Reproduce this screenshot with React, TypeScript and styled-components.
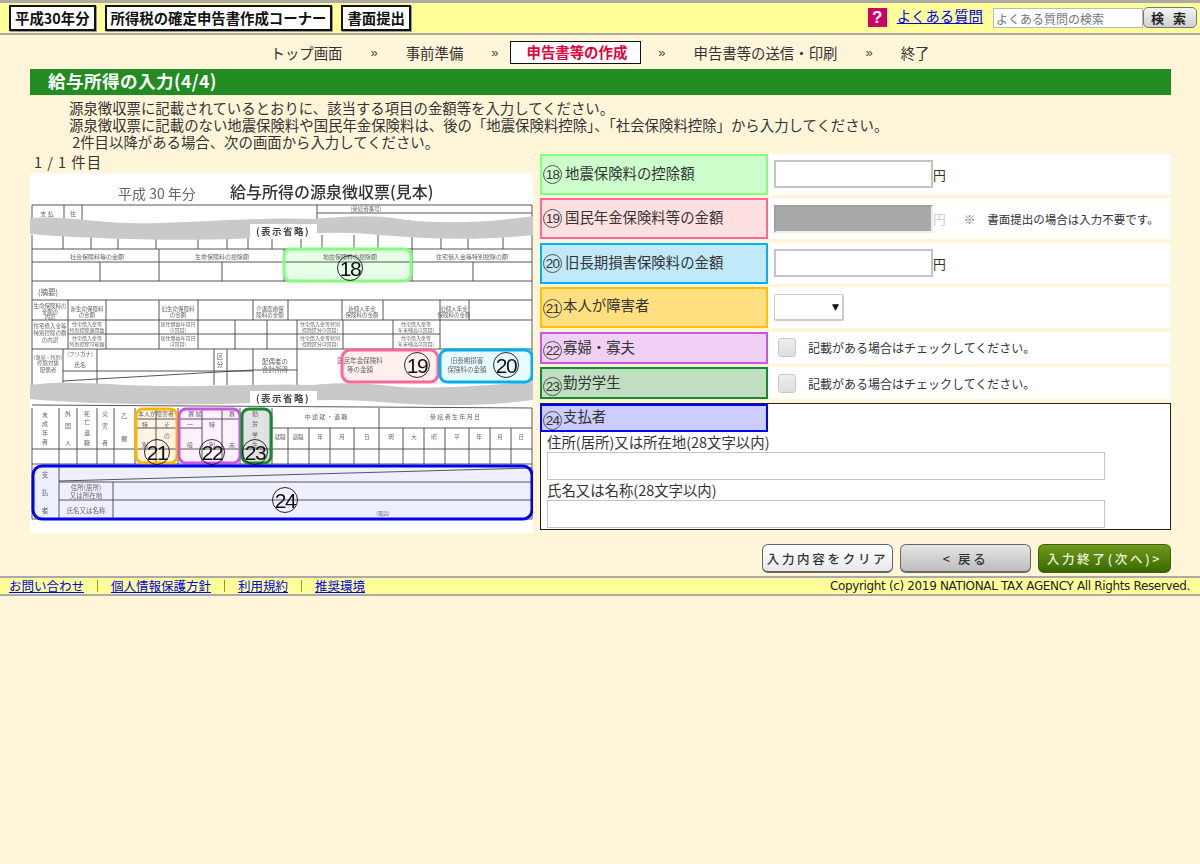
import React from "react";
import styled, { createGlobalStyle } from "styled-components";

const GlobalStyle = createGlobalStyle`
  html, body { margin: 0; padding: 0; }
  body {
    background: #fff6da;
    color: #333;
    font-family: "Noto Sans CJK JP", "Liberation Sans", sans-serif;
    font-size: 14.4px;
    min-height: 864px;
  }
`;

const TopBar = styled.header`
  box-sizing: border-box;
  height: 35px;
  background: #ffff99;
  border-top: 3px solid #aaa;
  border-bottom: 2px solid #aaa;
  padding: 2px 3px 0 9px;
  display: flex;
  align-items: flex-start;
`;
const TitleBox = styled.div`
  box-sizing: border-box;
  height: 26px;
  background: #fff;
  border: 2px solid #111;
  box-shadow: 1px 1px 0 #999;
  color: #111;
  font-weight: 700;
  font-size: 14.4px;
  line-height: 21px;
  padding: 0 4px;
  margin-right: 9px;
  white-space: nowrap;
`;
const Spacer = styled.div`flex: 1;`;
const HelpIcon = styled.div`
  width: 19px;
  height: 19px;
  margin-top: 3px;
  background: #cc0066;
  color: #fff;
  font: 700 17px/19px "Liberation Sans", sans-serif;
  text-align: center;
`;
const FaqLink = styled.a`
  color: #0000ee;
  text-decoration: underline;
  font-size: 14.4px;
  line-height: 20px;
  margin: 1px 10px 0 10px;
`;
const SearchInput = styled.input`
  box-sizing: border-box;
  width: 150px;
  height: 20px;
  margin-top: 3px;
  border: 1px solid #bbb;
  background: #fff;
  padding: 0 2px;
  font-family: inherit;
  font-size: 12px;
  &::placeholder { color: #777; opacity: 1; }
`;
const SearchButton = styled.button`
  box-sizing: border-box;
  width: 54px;
  height: 21px;
  margin: 2px 0 0 0;
  padding: 0;
  border: 1px solid #777;
  border-radius: 5px;
  background: linear-gradient(#f4f4f4, #cfcfcf);
  color: #222;
  font: 700 13px/18px "Noto Sans CJK JP", sans-serif;
  letter-spacing: 3px;
`;

const StepNav = styled.nav`
  height: 34px;
  display: flex;
  align-items: center;
  justify-content: center;
  gap: 28px;
  padding-top: 0;
`;
const Step = styled.span`
  color: #333;
  font-size: 14.4px;
  white-space: nowrap;
`;
const Arrow = styled.span`
  color: #444;
  font: 13px "Liberation Sans", sans-serif;
`;
const ActiveStep = styled.span`
  box-sizing: border-box;
  height: 23px;
  line-height: 20px;
  padding: 0 13px 0 16px;
  margin: 1px -11px 0 -17px;
  background: #fff;
  border: 1px solid #111;
  color: #e6003c;
  font-weight: 700;
  font-size: 14.4px;
  white-space: nowrap;
`;

const Main = styled.main`
  margin: 0 29px 0 30px;
`;
const PageTitle = styled.h1`
  box-sizing: border-box;
  height: 26px;
  margin: 0;
  padding-left: 18px;
  background: #228b22;
  color: #fff;
  font-size: 17.6px;
  font-weight: 700;
  line-height: 24px;
  letter-spacing: 0.4px;
`;
const Intro = styled.div`
  padding: 4px 0 0 39px;
  height: 58px;
  box-sizing: border-box;
  font-size: 14.4px;
  line-height: 17px;
  color: #333;
`;
const Columns = styled.div`
  display: flex;
  gap: 7px;
  align-items: flex-start;
`;
const LeftColumn = styled.div`
  width: 503px;
  flex: none;
`;
const Counter = styled.div`
  height: 20px;
  padding-left: 4px;
  font-size: 14.4px;
  line-height: 18px;
  letter-spacing: 1px;
  color: #333;
`;
const SlipDrawing = styled.svg`
  display: block;
  width: 503px;
  height: 360px;
  background: #fff;
  filter: blur(0.3px);
`;
const RightColumn = styled.div`
  flex: 1;
  display: flex;
  flex-direction: column;
  gap: 3.5px;
  padding-top: 0.5px;
`;
const Row = styled.div<{ $h: number }>`
  height: ${(p) => p.$h}px;
  background: #fff;
  display: flex;
  align-items: center;
`;
const FieldLabel = styled.div<{ $bg: string; $line: string; $gap: number }>`
  box-sizing: border-box;
  width: 228px;
  height: 100%;
  flex: none;
  background: ${(p) => p.$bg};
  border: 2px solid ${(p) => p.$line};
  padding: 0 0 0 1px;
  display: flex;
  align-items: flex-start;
  gap: ${(p) => p.$gap}px;
  color: #333;
  font-size: 14.4px;
`;
const LabelText = styled.span<{ $top: number }>`
  margin-top: ${(p) => p.$top}px;
  line-height: 20px;
  white-space: nowrap;
`;
const Circled = styled.span<{ $top: number }>`
  box-sizing: border-box;
  width: 19px;
  height: 19px;
  flex: none;
  margin-top: ${(p) => p.$top}px;
  border: 1px solid #555;
  border-radius: 50%;
  color: #333;
  font: 13.5px/17px "Liberation Sans", sans-serif;
  letter-spacing: -0.8px;
  text-align: center;
`;
const Controls = styled.div`
  display: flex;
  align-items: center;
  padding-left: 6px;
  color: #333;
`;
const AmountInput = styled.input`
  box-sizing: border-box;
  width: 159px;
  height: 28px;
  border: 2px solid #c4c4c4;
  background: ${(p) => (p.disabled ? "#a9a9a9" : "#fff")};
  border-color: ${(p) => (p.disabled ? "#a0a0a0 #eee #eee #a0a0a0" : "#c4c4c4")};
  padding: 0;
`;
const Yen = styled.span<{ $muted?: boolean }>`
  color: ${(p) => (p.$muted ? "#ccc" : "#333")};
  font-size: 12.8px;
`;
const Note = styled.span`
  margin-left: 18px;
  font-size: 11.5px;
  letter-spacing: 0;
  & > i { font-style: normal; color: #777; margin-right: 12px; }
`;
const SelectWrap = styled.div`
  position: relative;
  width: 70px;
  height: 27px;
  &::after {
    content: "▼";
    position: absolute;
    right: 5px;
    top: 5px;
    font: 9px/16px "DejaVu Sans", sans-serif;
    color: #111;
  }
`;
const Select = styled.select`
  box-sizing: border-box;
  appearance: none;
  width: 100%;
  height: 100%;
  background: #fff;
  border: 1px solid #ccc;
  border-width: 1px 2px 2px 1px;
  border-radius: 2px;
`;
const Check = styled.input`
  appearance: none;
  box-sizing: border-box;
  width: 18px;
  height: 19px;
  margin: 0 12px 0 4px;
  background: linear-gradient(#eee, #ddd);
  border: 1px solid #c8c8c8;
  border-radius: 3px;
`;
const CheckText = styled.span`
  font-size: 12px;
  color: #333;
`;
const PayerBox = styled.div`
  box-sizing: border-box;
  height: 127px;
  background: #fff;
  border: 1px solid #222;
  border-width: 1px 1px 1px 1px;
`;
const PayerLabel = styled(FieldLabel)`
  height: 28px;
  border-width: 2px;
  margin-left: -1px;
  padding-left: 1px;
`;
const PayerField = styled.label`
  display: block;
  padding-left: 6px;
  font-size: 14.4px;
  line-height: 20px;
  color: #333;
`;
const PayerInput = styled.input`
  display: block;
  box-sizing: border-box;
  width: 558px;
  height: 28px;
  border: 1px solid #c4c4c4;
  background: #fff;
  padding: 0;
`;
const Actions = styled.div`
  display: flex;
  justify-content: flex-end;
  gap: 7px;
  margin-top: 11px;
`;
const ActionButton = styled.button<{ $kind: "plain" | "back" | "next" }>`
  box-sizing: border-box;
  width: ${(p) => (p.$kind === "next" ? 133 : 131)}px;
  height: 29px;
  padding: 0;
  border: 1px solid ${(p) => (p.$kind === "next" ? "#3c6200" : "#666")};
  border-bottom-width: 2px;
  border-radius: 6px;
  background: ${(p) =>
    p.$kind === "plain"
      ? "linear-gradient(#fff, #e9e9e9)"
      : p.$kind === "back"
        ? "linear-gradient(#e6e6e6, #bdbdbd)"
        : "linear-gradient(#6f9a1c, #3d6a00)"};
  color: ${(p) => (p.$kind === "next" ? "#eef3dc" : "#333")};
  font-family: inherit;
  font-size: 12.5px;
  font-weight: 500;
  letter-spacing: 2.7px;
  white-space: nowrap;
`;
const Footer = styled.footer`
  box-sizing: border-box;
  height: 20px;
  margin-top: 3px;
  background: #ffff99;
  border-top: 2px solid #aaa;
  border-bottom: 2px solid #aaa;
  padding: 0 10px 0 9px;
  display: flex;
  align-items: center;
  font-size: 12.5px;
  line-height: 16px;
`;
const FootLink = styled.a`
  color: #0000ee;
  text-decoration: underline;
  white-space: nowrap;
`;
const FootSep = styled.span`
  width: 1px;
  height: 12px;
  margin: 0 13px;
  background: #c08a20;
`;
const Copyright = styled.span`
  margin-left: auto;
  color: #222;
  font: 12px/16px "DejaVu Sans", sans-serif;
  letter-spacing: -0.35px;
`;

type Txt = [number, number, string, number?];

// horizontal + vertical ruling of the sample slip: [x1, y1, x2, y2]
const lines: number[][] = [
  [2, 32, 502, 32], [2, 32, 2, 50], [502, 32, 502, 50], [34, 32, 34, 50], [52, 32, 52, 50], [287, 32, 287, 54],
  [287, 40, 502, 40],
  ...[33, 61, 88, 126, 168, 197, 218, 242, 271, 292, 324, 348, 382, 411, 438, 473].map((x) => [x, 62, x, 76]),
  [2, 62, 2, 176], [502, 62, 502, 176],
  [2, 76, 502, 76], [2, 89, 502, 89], [2, 108, 502, 108], [2, 127, 502, 127], [2, 147, 502, 147], [38, 161, 410, 161], [2, 176, 502, 176],
  ...[129, 254, 382].map((x) => [x, 76, x, 108]),
  ...[70, 192, 443].map((x) => [x, 89, x, 108]),
  ...[38, 76, 129, 168, 223, 258, 312, 353, 410, 439].map((x) => [x, 127, x, 147]),
  ...[38, 76, 129, 168, 205, 237, 267, 313, 363, 410].map((x) => [x, 147, x, 176]),
  [2, 176, 2, 212], [502, 176, 502, 212],
  ...[33, 67, 184, 197, 223, 267].map((x) => [x, 176, x, 212]),
  [33, 198, 223, 198], [33, 208, 223, 197], [223, 197, 267, 197],
  [2, 232, 502, 235], [2, 235, 2, 291], [502, 235, 502, 346],
  ...[29, 47, 67, 84, 105, 126, 148, 172, 192, 210, 242].map((x) => [x, 235, x, 291]),
  ...[258, 279, 300, 324, 349, 373, 394, 415, 439, 460, 481].map((x) => [x, 255, x, 291]),
  [349, 235, 349, 255], [242, 255, 502, 255], [105, 255, 172, 255], [148, 246, 210, 246], [105, 246, 148, 246],
  [2, 276, 502, 276], [2, 291, 502, 291], [2, 291, 2, 346], [2, 346, 502, 346],
  [29, 291, 29, 346], [83, 309, 83, 346], [29, 309, 502, 309], [29, 327, 502, 327], [29, 308, 502, 295],
];

const labels: Txt[] = [
  [17, 43, "支 払"], [43, 43, "住"], [336, 38, "(受給者番号)", 5.5],
  [67, 86, "社会保険料等の金額"], [192, 86, "生命保険料の控除額"], [320, 86, "地震保険料の控除額"], [442, 86, "住宅借入金等特別控除の額"],
  [18, 122, "(摘要)", 7.5],
  [20, 135, "生命保険料の", 5.5], [20, 141, "金額の", 5.5], [20, 146, "内訳", 5.5],
  [57, 138, "新生命保険料", 5.5], [57, 144, "の金額", 5.5], [148, 138, "旧生命保険料", 5.5], [148, 144, "の金額", 5.5],
  [240, 138, "介護医療保", 5.5], [240, 144, "険料の金額", 5.5], [332, 138, "新個人年金", 5.5], [332, 144, "保険料の金額", 5.5],
  [424, 138, "旧個人年金", 5.5], [424, 144, "保険料の金額", 5.5],
  [20, 155, "住宅借入金等", 5.5], [20, 162, "特別控除の額", 5.5], [20, 169, "の内訳", 5.5],
  [57, 153, "住宅借入金等", 5], [57, 159, "特別控除適用数", 5], [57, 167, "住宅借入金等", 5], [57, 173, "特別控除可能額", 5],
  [148, 153, "居住開始年月日", 5], [148, 159, "(1回目)", 5], [148, 167, "居住開始年月日", 5], [148, 173, "(2回目)", 5],
  [290, 153, "住宅借入金等特別", 5], [290, 159, "控除区分(1回目)", 5], [290, 167, "住宅借入金等特別", 5], [290, 173, "控除区分(2回目)", 5],
  [386, 153, "住宅借入金等", 5], [386, 159, "年末残高(1回目)", 5], [386, 167, "住宅借入金等", 5], [386, 173, "年末残高(2回目)", 5],
  [18, 186, "(源泉・特別)", 5], [18, 192, "控除対象", 5.5], [18, 199, "配偶者", 5.5],
  [50, 183, "(フリガナ)", 5.5], [50, 194, "氏名"], [190, 186, "区", 6.5], [190, 194, "分", 6.5],
  [245, 191, "配偶者の", 6.5], [245, 199, "合計所得", 6.5],
  [330, 190, "国民年金保険料", 6.5], [330, 199, "等の金額", 6.5], [437, 190, "旧長期損害", 6.5], [437, 199, "保険料の金額", 6.5],
  [15, 244, "未", 6], [15, 253, "成", 6], [15, 262, "年", 6], [15, 271, "者", 6],
  [38, 243, "外", 6], [38, 255, "国", 6], [38, 272, "人", 6],
  [57, 243, "死", 6], [57, 251, "亡", 6], [57, 262, "退", 6], [57, 272, "職", 6],
  [75, 243, "災", 6], [75, 255, "害", 6], [75, 272, "者", 6],
  [94, 245, "乙", 6], [94, 268, "欄", 6],
  [126, 243, "本人が障害者", 6], [115, 254, "特", 6], [137, 254, "そ", 6], [137, 265, "の", 6], [115, 274, "別", 6],
  [165, 243, "寡   婦", 6], [160, 254, "一", 6], [160, 274, "般", 6], [182, 254, "特", 6], [182, 274, "別", 6], [202, 243, "寡", 6], [202, 274, "夫", 6],
  [225, 243, "勤", 6], [225, 253, "労", 6], [225, 264, "学", 6], [225, 274, "生", 6],
  [250, 266, "就職", 5.5], [268, 266, "退職", 5.5], [290, 266, "年", 5.5], [312, 266, "月", 5.5], [337, 266, "日", 5.5],
  [296, 246, "中 途 就 ・ 退 職", 6], [425, 246, "受 給 者 生 年 月 日", 6],
  [361, 266, "明", 5.5], [384, 266, "大", 5.5], [404, 266, "昭", 5.5], [427, 266, "平", 5.5], [449, 266, "年", 5.5], [470, 266, "月", 5.5], [491, 266, "日", 5.5],
  [15, 304, "支", 7], [15, 322, "払", 7], [15, 340, "者", 7],
  [56, 317, "住所(居所)", 6.5], [56, 325, "又は所在地", 6.5], [56, 340, "氏名又は名称", 6.5], [353, 342, "(電話)", 5],
];

const marks: { n: number; cx: number; cy: number }[] = [
  { n: 18, cx: 320, cy: 95 }, { n: 19, cx: 387, cy: 192 }, { n: 20, cx: 476, cy: 192 },
  { n: 21, cx: 127, cy: 279 }, { n: 22, cx: 182, cy: 279 }, { n: 23, cx: 225, cy: 279 }, { n: 24, cx: 255, cy: 327 },
];

const highlights = [
  { x: 254, y: 76, w: 127, h: 32, r: 7, line: "#80ff80", fill: "#e6ffe6" },
  { x: 312, y: 177, w: 96, h: 32, r: 8, line: "#ff6699", fill: "#fff0ee" },
  { x: 410, y: 177, w: 92, h: 32, r: 7, line: "#00b0f0", fill: "#e8fbff" },
  { x: 106, y: 236, w: 41, h: 54, r: 7, line: "#ffb400", fill: "#fff4e4" },
  { x: 149, y: 236, w: 61, h: 54, r: 7, line: "#c858e0", fill: "#fdf0ff" },
  { x: 212, y: 236, w: 29, h: 54, r: 7, line: "#178a30", fill: "#e2e2e2" },
  { x: 3, y: 293, w: 499, h: 53, r: 9, line: "#0000ee", fill: "#eef0ff" },
];

function SampleSlip() {
  return (
    <SlipDrawing viewBox="0 0 503 360">
      <text x="88" y="26" fontSize="14" fill="#666" fontFamily="Noto Sans CJK JP">平成 30 年分</text>
      <text x="200" y="25" fontSize="16" fontWeight="500" fill="#333" fontFamily="Noto Sans CJK JP">給与所得の源泉徴収票(見本)</text>
      {highlights.map((h) => (
        <rect key={h.line} x={h.x} y={h.y} width={h.w} height={h.h} rx={h.r} fill={h.fill} />
      ))}
      <g stroke="#444" strokeWidth="0.9">
        {lines.map((l, i) => (
          <line key={i} x1={l[0]} y1={l[1]} x2={l[2]} y2={l[3]} />
        ))}
      </g>
      <path d="M0 45 C40 42 70 52 130 50 C190 48 240 44 283 46 C310 44 340 41 370 46 C400 51 460 50 503 43 L503 62 C450 68 400 66 350 62 C310 58 280 60 250 63 C180 70 60 66 0 61 Z" fill="#c9c9c9" />
      <rect x="220" y="51" width="67" height="15" fill="#fff" />
      <text x="253" y="62" textAnchor="middle" fontSize="9.5" fontWeight="700" fill="#444" letterSpacing="1.5" fontFamily="Noto Sans CJK JP">(表示省略)</text>
      <path d="M0 212 C40 207 70 212 130 213 C190 214 240 210 283 212 C310 209 340 210 370 214 C400 216 460 213 503 208 L503 227 C450 234 400 233 350 229 C310 226 280 227 250 229 C180 233 60 232 0 226 Z" fill="#c9c9c9" />
      <rect x="220" y="218" width="67" height="14" fill="#fff" />
      <text x="253" y="229" textAnchor="middle" fontSize="9.5" fontWeight="700" fill="#444" letterSpacing="1.5" fontFamily="Noto Sans CJK JP">(表示省略)</text>
      <g fill="#666" fontFamily="Noto Sans CJK JP" textAnchor="middle">
        {labels.map(([x, y, t, s], i) => (
          <text key={i} x={x} y={y} fontSize={s ?? 6}>{t}</text>
        ))}
      </g>
      {highlights.map((h) => (
        <rect key={h.line} x={h.x} y={h.y} width={h.w} height={h.h} rx={h.r} fill="none" stroke={h.line} strokeWidth="3" />
      ))}
      {marks.map((m) => (
        <g key={m.n}>
          <circle cx={m.cx} cy={m.cy} r="12.5" fill="none" stroke="#111" strokeWidth="0.9" />
          <text x={m.cx} y={m.cy + 7.5} textAnchor="middle" fontSize="21" fill="#111" letterSpacing="-1.5" fontFamily="Liberation Sans">{m.n}</text>
        </g>
      ))}
    </SlipDrawing>
  );
}

export default function App() {
  return (
    <>
      <GlobalStyle />
      <TopBar>
        <TitleBox>平成30年分</TitleBox>
        <TitleBox>所得税の確定申告書作成コーナー</TitleBox>
        <TitleBox>書面提出</TitleBox>
        <Spacer />
        <HelpIcon>?</HelpIcon>
        <FaqLink href="#">よくある質問</FaqLink>
        <SearchInput placeholder="よくある質問の検索" />
        <SearchButton>検 索</SearchButton>
      </TopBar>
      <StepNav>
        <Step>トップ画面</Step>
        <Arrow>»</Arrow>
        <Step>事前準備</Step>
        <Arrow>»</Arrow>
        <ActiveStep>申告書等の作成</ActiveStep>
        <Arrow>»</Arrow>
        <Step>申告書等の送信・印刷</Step>
        <Arrow>»</Arrow>
        <Step>終了</Step>
      </StepNav>
      <Main>
        <PageTitle>給与所得の入力(4/4)</PageTitle>
        <Intro>
          <div>源泉徴収票に記載されているとおりに、該当する項目の金額等を入力してください。</div>
          <div>源泉徴収票に記載のない地震保険料や国民年金保険料は、後の「地震保険料控除」、「社会保険料控除」から入力してください。</div>
          <div>&nbsp;2件目以降がある場合、次の画面から入力してください。</div>
        </Intro>
        <Columns>
          <LeftColumn>
            <Counter>1 / 1 件目</Counter>
            <SampleSlip />
          </LeftColumn>
          <RightColumn>
            <Row $h={41}>
              <FieldLabel $bg="#ccffcc" $line="#80ff80" $gap={3}>
                <Circled $top={9}>18</Circled>
                <LabelText $top={7}>地震保険料の控除額</LabelText>
              </FieldLabel>
              <Controls>
                <AmountInput />
                <Yen>円</Yen>
              </Controls>
            </Row>
            <Row $h={41}>
              <FieldLabel $bg="#ffe0e0" $line="#ff6699" $gap={3}>
                <Circled $top={9}>19</Circled>
                <LabelText $top={7}>国民年金保険料等の金額</LabelText>
              </FieldLabel>
              <Controls>
                <AmountInput disabled />
                <Yen $muted>円</Yen>
                <Note>
                  <i>※</i>書面提出の場合は入力不要です。
                </Note>
              </Controls>
            </Row>
            <Row $h={41}>
              <FieldLabel $bg="#c0eafc" $line="#00b0f0" $gap={3}>
                <Circled $top={9}>20</Circled>
                <LabelText $top={7}>旧長期損害保険料の金額</LabelText>
              </FieldLabel>
              <Controls>
                <AmountInput />
                <Yen>円</Yen>
              </Controls>
            </Row>
            <Row $h={41}>
              <FieldLabel $bg="#ffdf80" $line="#ffc000" $gap={1}>
                <Circled $top={10}>21</Circled>
                <LabelText $top={6}>本人が障害者</LabelText>
              </FieldLabel>
              <Controls>
                <SelectWrap>
                  <Select />
                </SelectWrap>
              </Controls>
            </Row>
            <Row $h={32}>
              <FieldLabel $bg="#f0d0f4" $line="#c858e0" $gap={1}>
                <Circled $top={7}>22</Circled>
                <LabelText $top={3}>寡婦・寡夫</LabelText>
              </FieldLabel>
              <Controls>
                <Check type="checkbox" />
                <CheckText>記載がある場合はチェックしてください。</CheckText>
              </Controls>
            </Row>
            <Row $h={32}>
              <FieldLabel $bg="#c0dfc0" $line="#178a30" $gap={1}>
                <Circled $top={8}>23</Circled>
                <LabelText $top={3}>勤労学生</LabelText>
              </FieldLabel>
              <Controls>
                <Check type="checkbox" />
                <CheckText>記載がある場合はチェックしてください。</CheckText>
              </Controls>
            </Row>
            <PayerBox>
              <PayerLabel $bg="#ccccff" $line="#0000ff" $gap={1}>
                <Circled $top={5}>24</Circled>
                <LabelText $top={0}>支払者</LabelText>
              </PayerLabel>
              <PayerField>
                住所(居所)又は所在地(28文字以内)
                <PayerInput />
              </PayerField>
              <PayerField>
                氏名又は名称(28文字以内)
                <PayerInput />
              </PayerField>
            </PayerBox>
          </RightColumn>
        </Columns>
        <Actions>
          <ActionButton $kind="plain">入力内容をクリア</ActionButton>
          <ActionButton $kind="back">&lt; 戻る</ActionButton>
          <ActionButton $kind="next">入力終了(次へ)&gt;</ActionButton>
        </Actions>
      </Main>
      <Footer>
        <FootLink href="#">お問い合わせ</FootLink>
        <FootSep />
        <FootLink href="#">個人情報保護方針</FootLink>
        <FootSep />
        <FootLink href="#">利用規約</FootLink>
        <FootSep />
        <FootLink href="#">推奨環境</FootLink>
        <Copyright>Copyright (c) 2019 NATIONAL TAX AGENCY All Rights Reserved.</Copyright>
      </Footer>
    </>
  );
}
